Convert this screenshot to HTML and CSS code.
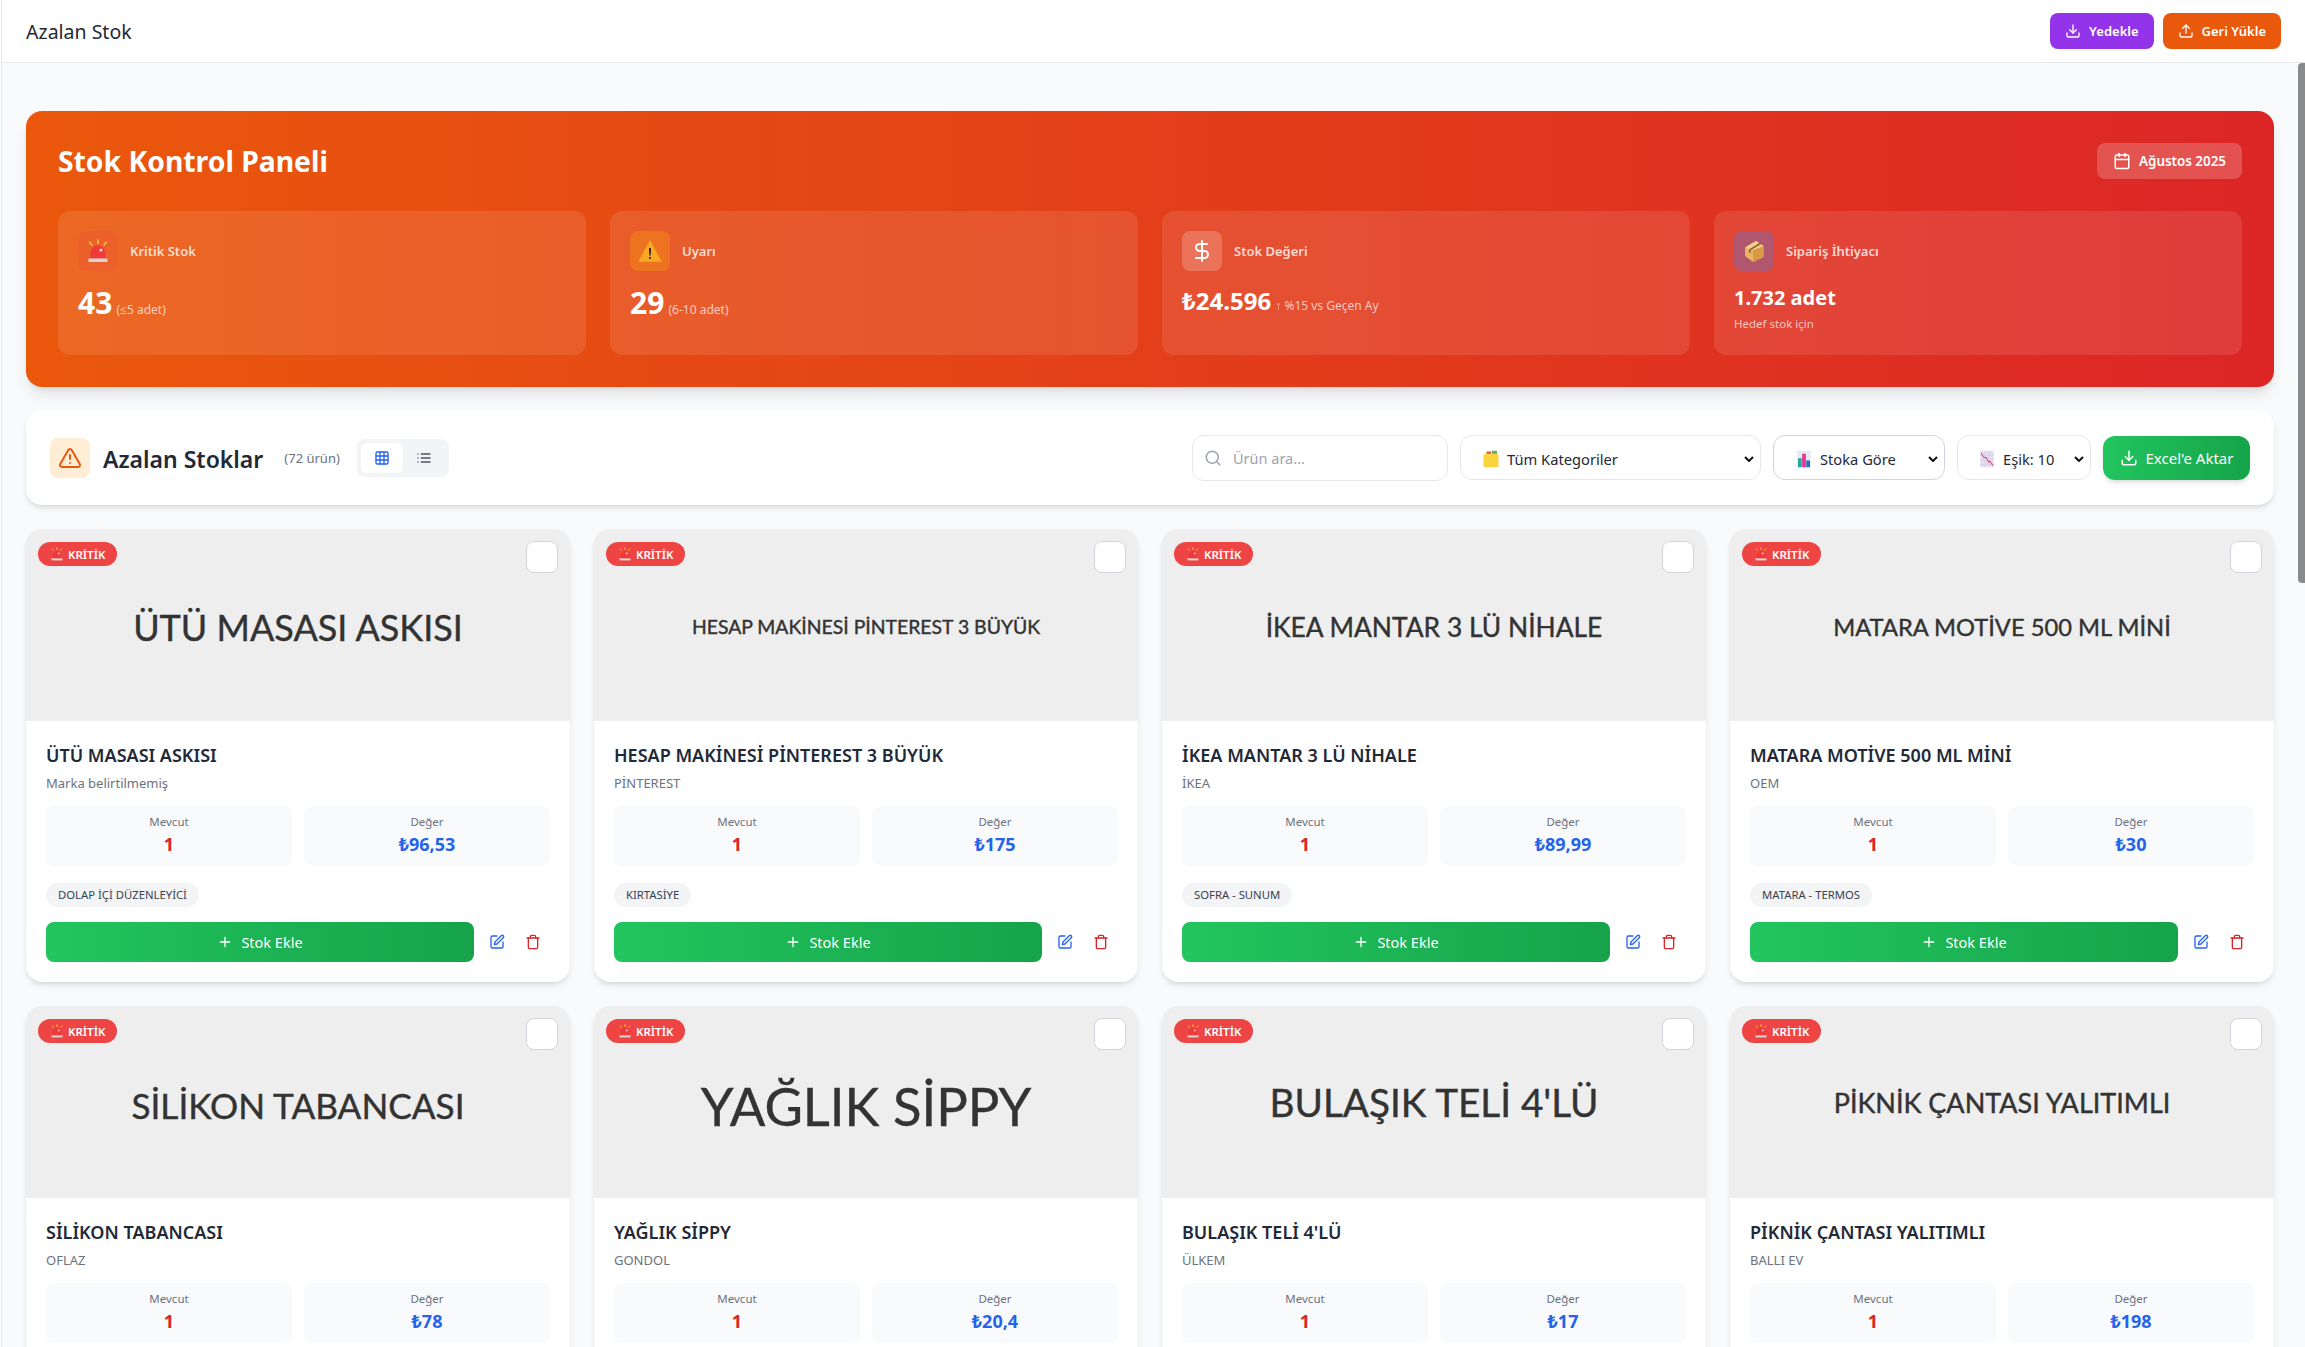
FILE: index.html
```html
<!DOCTYPE html>
<html lang="tr">
<head>
  <meta charset="UTF-8" />
  <meta name="viewport" content="width=device-width, initial-scale=1.0" />
  <title>Azalan Stok</title>
  <link rel="stylesheet" href="styles.css">
</head>
<body>
  <!-- ikonlar -->
  <svg class="sprite" xmlns="http://www.w3.org/2000/svg">
    <symbol id="i-download" viewBox="0 0 24 24"><path d="M21 15v4a2 2 0 0 1-2 2H5a2 2 0 0 1-2-2v-4"/><path d="m7 10 5 5 5-5"/><path d="M12 15V3"/></symbol>
    <symbol id="i-upload" viewBox="0 0 24 24"><path d="M21 15v4a2 2 0 0 1-2 2H5a2 2 0 0 1-2-2v-4"/><path d="m17 8-5-5-5 5"/><path d="M12 3v12"/></symbol>
    <symbol id="i-calendar" viewBox="0 0 24 24"><path d="M8 2v4"/><path d="M16 2v4"/><rect x="3" y="4" width="18" height="18" rx="2"/><path d="M3 10h18"/></symbol>
    <symbol id="i-dollar" viewBox="0 0 24 24"><path d="M12 2v20"/><path d="M17 5H9.5a3.5 3.5 0 0 0 0 7h5a3.5 3.5 0 0 1 0 7H6"/></symbol>
    <symbol id="i-alert" viewBox="0 0 24 24"><path d="m21.73 18-8-14a2 2 0 0 0-3.48 0l-8 14A2 2 0 0 0 4 21h16a2 2 0 0 0 1.73-3"/><path d="M12 9v4"/><path d="M12 17h.01"/></symbol>
    <symbol id="i-grid" viewBox="0 0 24 24"><rect x="3" y="3" width="18" height="18" rx="2"/><path d="M3 9h18"/><path d="M3 15h18"/><path d="M9 3v18"/><path d="M15 3v18"/></symbol>
    <symbol id="i-list" viewBox="0 0 24 24"><path d="M8 6h13"/><path d="M8 12h13"/><path d="M8 18h13"/><path d="M3 6h.01"/><path d="M3 12h.01"/><path d="M3 18h.01"/></symbol>
    <symbol id="i-search" viewBox="0 0 24 24"><circle cx="11" cy="11" r="8"/><path d="m21 21-4.3-4.3"/></symbol>
    <symbol id="i-plus" viewBox="0 0 24 24"><path d="M5 12h14"/><path d="M12 5v14"/></symbol>
    <symbol id="i-edit" viewBox="0 0 24 24"><path d="M12 3H5a2 2 0 0 0-2 2v14a2 2 0 0 0 2 2h14a2 2 0 0 0 2-2v-7"/><path d="M18.4 2.6a2.1 2.1 0 1 1 3 3L12 15l-4 1 1-4Z"/></symbol>
    <symbol id="i-trash" viewBox="0 0 24 24"><path d="M3 6h18"/><path d="M19 6v14a2 2 0 0 1-2 2H7a2 2 0 0 1-2-2V6"/><path d="M8 6V4a2 2 0 0 1 2-2h4a2 2 0 0 1 2 2v2"/></symbol>
    <symbol id="e-siren" viewBox="0 0 24 24">
      <path d="M12 .8v3.700M3.500 3l2.500 3M20.500 3 18 6" fill="none" stroke="#f9c23c" stroke-width="1.600" stroke-linecap="round"/>
      <path d="M4.500 19.500V14a7.500 7.500 0 0 1 15 0v5.500z" fill="#f03a3a"/>
      <circle cx="15" cy="11" r="1.600" fill="#ffd5d5"/>
      <rect x="2.500" y="19.500" width="19" height="3.500" fill="#d5d5d5"/>
    </symbol>
    <symbol id="e-warning" viewBox="0 0 24 24">
      <path d="M12 2.500 22.500 22h-21z" fill="#f9a825" stroke="#f9a825" stroke-width="1.500" stroke-linejoin="round"/>
      <path d="M11.100 9h1.800l-.3 7.500h-1.200z" fill="#111"/><circle cx="12" cy="19" r="1" fill="#111"/>
    </symbol>
    <symbol id="e-box" viewBox="0 0 24 24">
      <path d="M3 8.500 14 2l7.500 5v11L11 23l-8-6z" fill="#e8b565"/>
      <path d="M11 11v12l10.500-5V7z" fill="#d99a45"/>
      <path d="M3 8.500 11 11l10.500-4L14 2z" fill="#f5cd8a"/>
      <path d="M7 10.500 17.500 4l1.600 1L8.600 11.200z" fill="#8a5a2b"/>
      <path d="M7 10.500v3l1.600.6v-2.900z" fill="#8a5a2b"/>
    </symbol>
    <symbol id="e-dividers" viewBox="0 0 24 24">
      <rect x="6" y="2" width="6" height="5" fill="#e2574c"/><rect x="13" y="1" width="7" height="5" fill="#5cb85c"/>
      <rect x="2" y="5" width="20" height="18" rx="2.500" fill="#fdd33f"/>
    </symbol>
    <symbol id="e-bars" viewBox="0 0 24 24">
      <rect x="3" y="1" width="18" height="22" fill="#e6e8f2"/>
      <rect x="4" y="11" width="5" height="12" fill="#1fa8a0"/><rect x="9.500" y="5" width="5" height="18" fill="#e5398b"/><rect x="15" y="14" width="5" height="9" fill="#2b6cc4"/>
    </symbol>
    <symbol id="e-down" viewBox="0 0 24 24">
      <rect x="3" y="1" width="18" height="22" fill="#e3def0"/>
      <path d="M3 7h18M3 13h18M3 19h18M9 1v22M15 1v22" stroke="#cfc9e0" stroke-width=".8" fill="none"/>
      <path d="m4 4 4 6 3 0 3 6 2-1 4 6" stroke="#e0447c" stroke-width="1.400" fill="none"/>
    </symbol>
  </svg>

  <div class="rail"></div>

  <div class="app">
    <!-- Üst bar -->
    <header class="topbar">
      <span class="topbar__title">Azalan Stok</span>
      <div class="topbar__actions">
        <button class="top-btn top-btn--purple" type="button"><svg class="ico ico--16"><use href="#i-download"/></svg>Yedekle</button>
        <button class="top-btn top-btn--orange" type="button"><svg class="ico ico--16"><use href="#i-upload"/></svg>Geri Yükle</button>
      </div>
    </header>

    <main class="content">
      <div class="scroll-thumb"></div>

      <!-- Panel -->
      <section class="hero">
        <div class="hero__head">
          <h1 class="hero__title">Stok Kontrol Paneli</h1>
          <div class="date-pill"><svg class="ico ico--18"><use href="#i-calendar"/></svg>Ağustos 2025</div>
        </div>
        <div class="hero__stats">
          <div class="stat">
            <div class="stat__head">
              <span class="stat__icon stat__icon--red"><svg class="emoji emoji--24"><use href="#e-siren"/></svg></span>
              <span class="stat__label">Kritik Stok</span>
            </div>
            <div class="stat__value"><b class="num-lg">43</b> <small>(≤5 adet)</small></div>
          </div>
          <div class="stat">
            <div class="stat__head">
              <span class="stat__icon stat__icon--amber"><svg class="emoji emoji--24"><use href="#e-warning"/></svg></span>
              <span class="stat__label">Uyarı</span>
            </div>
            <div class="stat__value"><b class="num-lg">29</b> <small>(6-10 adet)</small></div>
          </div>
          <div class="stat">
            <div class="stat__head">
              <span class="stat__icon stat__icon--white"><svg class="ico ico--24"><use href="#i-dollar"/></svg></span>
              <span class="stat__label">Stok Değeri</span>
            </div>
            <div class="stat__value stat__value--mid"><b class="num-md">₺24.596</b> <small>↑ %15 vs Geçen Ay</small></div>
          </div>
          <div class="stat">
            <div class="stat__head">
              <span class="stat__icon stat__icon--blue"><svg class="emoji emoji--24"><use href="#e-box"/></svg></span>
              <span class="stat__label">Sipariş İhtiyacı</span>
            </div>
            <div class="stat__value stat__value--sm"><b class="num-sm">1.732 adet</b></div>
            <div class="stat__note">Hedef stok için</div>
          </div>
        </div>
      </section>

      <!-- Araç çubuğu -->
      <section class="toolbar">
        <div class="toolbar__left">
          <span class="toolbar__icon"><svg class="ico ico--24"><use href="#i-alert"/></svg></span>
          <h2 class="toolbar__title">Azalan Stoklar</h2>
          <span class="toolbar__count">(72 ürün)</span>
          <div class="view-toggle">
            <button class="view-toggle__btn active" type="button"><svg class="ico ico--16"><use href="#i-grid"/></svg></button>
            <button class="view-toggle__btn" type="button"><svg class="ico ico--16"><use href="#i-list"/></svg></button>
          </div>
        </div>
        <div class="toolbar__right">
          <label class="search">
            <svg class="ico ico--18 search__icon"><use href="#i-search"/></svg>
            <input class="search__input" type="text" placeholder="Ürün ara...">
          </label>
          <div class="pick pick--cat"><svg class="emoji emoji--16"><use href="#e-dividers"/></svg><span class="pick__text">Tüm Kategoriler</span><svg class="pick__chev" viewBox="0 0 10 6"><path d="M1 1l4 4 4-4"/></svg></div>
          <div class="pick pick--sort"><svg class="emoji emoji--16"><use href="#e-bars"/></svg><span class="pick__text">Stoka Göre</span><svg class="pick__chev" viewBox="0 0 10 6"><path d="M1 1l4 4 4-4"/></svg></div>
          <div class="pick pick--limit"><svg class="emoji emoji--16"><use href="#e-down"/></svg><span class="pick__text">Eşik: 10</span><svg class="pick__chev" viewBox="0 0 10 6"><path d="M1 1l4 4 4-4"/></svg></div>
          <button class="excel-btn" type="button"><svg class="ico ico--18"><use href="#i-download"/></svg>Excel'e Aktar</button>
        </div>
      </section>

      <!-- Ürünler -->
      <section class="grid">
        <article class="card">
          <div class="thumb thumb--36">ÜTÜ MASASI ASKISI<span class="badge"><svg class="emoji emoji--14"><use href="#e-siren"/></svg>KRİTİK</span><input class="check" type="checkbox"></div>
          <div class="card__body">
            <h3 class="card__name">ÜTÜ MASASI ASKISI</h3>
            <p class="card__brand">Marka belirtilmemiş</p>
            <div class="figures">
              <div class="figure"><span class="figure__label">Mevcut</span><b class="figure__value figure__value--red">1</b></div>
              <div class="figure"><span class="figure__label">Değer</span><b class="figure__value figure__value--blue">₺96,53</b></div>
            </div>
            <span class="tag">DOLAP İÇİ DÜZENLEYİCİ</span>
            <div class="card__actions">
              <button class="add-btn" type="button"><svg class="ico ico--16"><use href="#i-plus"/></svg>Stok Ekle</button>
              <button class="icon-btn icon-btn--blue" type="button"><svg class="ico ico--16"><use href="#i-edit"/></svg></button>
              <button class="icon-btn icon-btn--red" type="button"><svg class="ico ico--16"><use href="#i-trash"/></svg></button>
            </div>
          </div>
        </article>

        <article class="card">
          <div class="thumb thumb--19">HESAP MAKİNESİ PİNTEREST 3 BÜYÜK<span class="badge"><svg class="emoji emoji--14"><use href="#e-siren"/></svg>KRİTİK</span><input class="check" type="checkbox"></div>
          <div class="card__body">
            <h3 class="card__name">HESAP MAKİNESİ PİNTEREST 3 BÜYÜK</h3>
            <p class="card__brand">PİNTEREST</p>
            <div class="figures">
              <div class="figure"><span class="figure__label">Mevcut</span><b class="figure__value figure__value--red">1</b></div>
              <div class="figure"><span class="figure__label">Değer</span><b class="figure__value figure__value--blue">₺175</b></div>
            </div>
            <span class="tag">KIRTASİYE</span>
            <div class="card__actions">
              <button class="add-btn" type="button"><svg class="ico ico--16"><use href="#i-plus"/></svg>Stok Ekle</button>
              <button class="icon-btn icon-btn--blue" type="button"><svg class="ico ico--16"><use href="#i-edit"/></svg></button>
              <button class="icon-btn icon-btn--red" type="button"><svg class="ico ico--16"><use href="#i-trash"/></svg></button>
            </div>
          </div>
        </article>

        <article class="card">
          <div class="thumb thumb--26">İKEA MANTAR 3 LÜ NİHALE<span class="badge"><svg class="emoji emoji--14"><use href="#e-siren"/></svg>KRİTİK</span><input class="check" type="checkbox"></div>
          <div class="card__body">
            <h3 class="card__name">İKEA MANTAR 3 LÜ NİHALE</h3>
            <p class="card__brand">İKEA</p>
            <div class="figures">
              <div class="figure"><span class="figure__label">Mevcut</span><b class="figure__value figure__value--red">1</b></div>
              <div class="figure"><span class="figure__label">Değer</span><b class="figure__value figure__value--blue">₺89,99</b></div>
            </div>
            <span class="tag">SOFRA - SUNUM</span>
            <div class="card__actions">
              <button class="add-btn" type="button"><svg class="ico ico--16"><use href="#i-plus"/></svg>Stok Ekle</button>
              <button class="icon-btn icon-btn--blue" type="button"><svg class="ico ico--16"><use href="#i-edit"/></svg></button>
              <button class="icon-btn icon-btn--red" type="button"><svg class="ico ico--16"><use href="#i-trash"/></svg></button>
            </div>
          </div>
        </article>

        <article class="card">
          <div class="thumb thumb--24">MATARA MOTİVE 500 ML MİNİ<span class="badge"><svg class="emoji emoji--14"><use href="#e-siren"/></svg>KRİTİK</span><input class="check" type="checkbox"></div>
          <div class="card__body">
            <h3 class="card__name">MATARA MOTİVE 500 ML MİNİ</h3>
            <p class="card__brand">OEM</p>
            <div class="figures">
              <div class="figure"><span class="figure__label">Mevcut</span><b class="figure__value figure__value--red">1</b></div>
              <div class="figure"><span class="figure__label">Değer</span><b class="figure__value figure__value--blue">₺30</b></div>
            </div>
            <span class="tag">MATARA - TERMOS</span>
            <div class="card__actions">
              <button class="add-btn" type="button"><svg class="ico ico--16"><use href="#i-plus"/></svg>Stok Ekle</button>
              <button class="icon-btn icon-btn--blue" type="button"><svg class="ico ico--16"><use href="#i-edit"/></svg></button>
              <button class="icon-btn icon-btn--red" type="button"><svg class="ico ico--16"><use href="#i-trash"/></svg></button>
            </div>
          </div>
        </article>

        <article class="card">
          <div class="thumb thumb--35 thumb--low">SİLİKON TABANCASI<span class="badge"><svg class="emoji emoji--14"><use href="#e-siren"/></svg>KRİTİK</span><input class="check" type="checkbox"></div>
          <div class="card__body">
            <h3 class="card__name">SİLİKON TABANCASI</h3>
            <p class="card__brand">OFLAZ</p>
            <div class="figures">
              <div class="figure"><span class="figure__label">Mevcut</span><b class="figure__value figure__value--red">1</b></div>
              <div class="figure"><span class="figure__label">Değer</span><b class="figure__value figure__value--blue">₺78</b></div>
            </div>
          </div>
        </article>

        <article class="card">
          <div class="thumb thumb--53 thumb--low">YAĞLIK SİPPY<span class="badge"><svg class="emoji emoji--14"><use href="#e-siren"/></svg>KRİTİK</span><input class="check" type="checkbox"></div>
          <div class="card__body">
            <h3 class="card__name">YAĞLIK SİPPY</h3>
            <p class="card__brand">GONDOL</p>
            <div class="figures">
              <div class="figure"><span class="figure__label">Mevcut</span><b class="figure__value figure__value--red">1</b></div>
              <div class="figure"><span class="figure__label">Değer</span><b class="figure__value figure__value--blue">₺20,4</b></div>
            </div>
          </div>
        </article>

        <article class="card">
          <div class="thumb thumb--39 thumb--up">BULAŞIK TELİ 4'LÜ<span class="badge"><svg class="emoji emoji--14"><use href="#e-siren"/></svg>KRİTİK</span><input class="check" type="checkbox"></div>
          <div class="card__body">
            <h3 class="card__name">BULAŞIK TELİ 4'LÜ</h3>
            <p class="card__brand">ÜLKEM</p>
            <div class="figures">
              <div class="figure"><span class="figure__label">Mevcut</span><b class="figure__value figure__value--red">1</b></div>
              <div class="figure"><span class="figure__label">Değer</span><b class="figure__value figure__value--blue">₺17</b></div>
            </div>
          </div>
        </article>

        <article class="card">
          <div class="thumb thumb--27 thumb--up">PİKNİK ÇANTASI YALITIMLI<span class="badge"><svg class="emoji emoji--14"><use href="#e-siren"/></svg>KRİTİK</span><input class="check" type="checkbox"></div>
          <div class="card__body">
            <h3 class="card__name">PİKNİK ÇANTASI YALITIMLI</h3>
            <p class="card__brand">BALLI EV</p>
            <div class="figures">
              <div class="figure"><span class="figure__label">Mevcut</span><b class="figure__value figure__value--red">1</b></div>
              <div class="figure"><span class="figure__label">Değer</span><b class="figure__value figure__value--blue">₺198</b></div>
            </div>
          </div>
        </article>
      </section>
    </main>
  </div>
</body>
</html>
```

FILE: styles.css
```css
/* RESET & BASE --------------------------------------------------------*/
*,::before,::after{box-sizing:border-box;margin:0;padding:0}
html,body{height:100%}
body{
  display:flex;
  overflow:hidden;
  font-family:"Noto Sans","Open Sans",sans-serif;
  background:#fff;
  color:#1f2937;
}
button{font-family:inherit;border:none;cursor:pointer}
.sprite{display:none}
.ico{fill:none;stroke:currentColor;stroke-width:2;stroke-linecap:round;stroke-linejoin:round;flex-shrink:0}
.ico--16{width:16px;height:16px}
.ico--18{width:18px;height:18px}
.ico--24{width:24px;height:24px}
.emoji{flex-shrink:0}
.emoji--14{width:14px;height:14px}
.emoji--16{width:18px;height:18px}
.emoji--24{width:24px;height:24px}

/* KABUK ---------------------------------------------------------------*/
.rail{width:2px;flex-shrink:0;background:#fff;border-right:1px solid #e5e7eb}
.app{flex:1;min-width:0;display:flex;flex-direction:column}

.topbar{
  height:63px;
  flex-shrink:0;
  display:flex;
  align-items:center;
  justify-content:space-between;
  padding:0 24px;
  background:#fff;
  border-bottom:1px solid #e5e7eb;
}
.topbar__title{font-size:19.5px;color:#1f2937}
.topbar__actions{display:flex;gap:9px}
.top-btn{
  height:36px;
  padding:0 15px;
  display:flex;
  align-items:center;
  gap:8px;
  border-radius:8px;
  color:#fff;
  font-size:13px;
  font-weight:600;
}
.top-btn--purple{background:#9333ea}
.top-btn--orange{background:#ea580c}

.content{
  position:relative;
  flex:1;
  min-height:0;
  overflow:hidden;
  padding:48px 31px 0 24px;
  background:#f9fafb;
}
.scroll-thumb{position:absolute;top:0;right:0;width:7px;height:520px;background:#8a8a8a;border-radius:4px 0 0 4px}

/* PANEL ---------------------------------------------------------------*/
.hero{
  padding:32px;
  margin-bottom:23px;
  border-radius:16px;
  background:linear-gradient(90deg,#ea580c,#dc2626);
  box-shadow:0 10px 15px -3px rgba(0,0,0,.1),0 4px 6px -4px rgba(0,0,0,.1);
  color:#fff;
}
.hero__head{display:flex;align-items:center;justify-content:space-between;height:36px;margin-bottom:32px}
.hero__title{font-size:28.3px;font-weight:700}
.date-pill{
  height:36px;
  padding:0 16px;
  display:flex;
  align-items:center;
  gap:8px;
  background:rgba(255,255,255,.2);
  border-radius:8px;
  font-size:13.400px;
  font-weight:600;
}
.hero__stats{display:grid;grid-template-columns:repeat(4,1fr);gap:24px}
.stat{height:144px;padding:20px;background:rgba(255,255,255,.1);border-radius:12px}
.stat__head{display:flex;align-items:center;gap:12px}
.stat__icon{width:40px;height:40px;border-radius:8px;display:flex;align-items:center;justify-content:center}
.stat__icon--red{background:rgba(239,68,68,.2)}
.stat__icon--amber{background:rgba(245,158,11,.35)}
.stat__icon--white{background:rgba(255,255,255,.2)}
.stat__icon--blue{background:rgba(59,130,246,.3)}
.stat__label{font-size:13px;font-weight:600;color:rgba(255,255,255,.8)}
.stat__value{margin-top:12px;line-height:40px}
.stat__value--mid{margin-top:10px}
.stat__value--sm{margin-top:12px;line-height:30px}
.stat__value small{font-size:12px;color:rgba(255,255,255,.7)}
.num-lg{font-size:30px}
.num-md{font-size:24px}
.num-sm{font-size:20px}
.stat__note{margin-top:2px;font-size:11.5px;color:rgba(255,255,255,.7)}

/* ARAÇ ÇUBUĞU ---------------------------------------------------------*/
.toolbar{
  height:95px;
  padding:0 24px;
  margin-bottom:24px;
  display:flex;
  align-items:center;
  justify-content:space-between;
  background:#fff;
  border-radius:16px;
  box-shadow:0 4px 6px -1px rgba(0,0,0,.1),0 2px 4px -2px rgba(0,0,0,.1);
}
.toolbar__left,.toolbar__right{display:flex;align-items:center}
.toolbar__right{gap:12px}
.toolbar__icon{
  width:40px;height:40px;
  margin-right:13px;
  display:flex;align-items:center;justify-content:center;
  background:#ffedd5;
  color:#ea580c;
  border-radius:8px;
}
.toolbar__title{padding-top:2px;font-size:23px;font-weight:600;color:#1f2937}
.toolbar__count{margin:0 17px 0 21px;font-size:13px;color:#6b7280}
.view-toggle{display:flex;padding:4px;background:#f3f4f6;border-radius:8px}
.view-toggle__btn{
  width:42px;height:30px;
  display:flex;align-items:center;justify-content:center;
  background:transparent;
  color:#4b5563;
  border-radius:6px;
}
.view-toggle__btn.active{background:#fff;color:#2563eb}

.search{position:relative;display:block;width:256px;height:46px}
.search__icon{position:absolute;left:12px;top:14px;color:#9ca3af}
.search__input{
  width:100%;height:100%;
  padding:0 12px 0 40px;
  border:1px solid #e5e7eb;
  border-radius:12px;
  font:14.5px "Noto Sans",sans-serif;
  outline:none;
}
.search__input::placeholder{color:#9ca3af}
.pick{
  height:45px;
  padding:2px 6px 0 21px;
  display:flex;
  align-items:center;
  gap:7px;
  border:1px solid #e5e7eb;
  border-radius:12px;
  background:#fff;
  font-size:14.7px;
  color:#1f2937;
}
.pick--cat{width:301px}
.pick--sort{width:172px;border-color:#d1d5db}
.pick--limit{width:134px;padding-left:20px}
.pick__text{flex:1}
.pick__chev{width:10px;height:6px;fill:none;stroke:#111;stroke-width:2}
.excel-btn{
  width:147px;height:44px;
  display:flex;align-items:center;justify-content:center;
  gap:8px;
  background:linear-gradient(90deg,#22c55e,#16a34a);
  color:#fff;
  border-radius:12px;
  font-size:15px;
  font-weight:400;
  box-shadow:0 4px 6px -1px rgba(0,0,0,.1),0 2px 4px -2px rgba(0,0,0,.1);
}

/* KARTLAR -------------------------------------------------------------*/
.grid{display:grid;grid-template-columns:repeat(4,1fr);gap:24px}
.card{background:#fff;border-radius:16px;overflow:hidden;box-shadow:0 4px 6px -1px rgba(0,0,0,.1),0 2px 4px -2px rgba(0,0,0,.1)}
.thumb{
  position:relative;
  height:192px;
  padding-top:3px;
  display:flex;
  align-items:center;
  justify-content:center;
  background:#eee;
  color:#333;
  font-family:"Lato",sans-serif;
  -webkit-text-stroke:.4px #333;
}
.thumb--low{padding-top:6px}
.thumb--up{padding-top:0}
.thumb--19{font-size:19.4px}
.thumb--24{font-size:23.7px}
.thumb--26{font-size:26.4px}
.thumb--27{font-size:27px}
.thumb--35{font-size:35.2px}
.thumb--36{font-size:36px}
.thumb--39{font-size:38.7px}
.thumb--53{font-size:52.6px}
.badge{
  position:absolute;
  top:13px;left:12px;
  height:24px;
  padding:0 12px;
  display:flex;
  align-items:center;
  gap:4px;
  background:#ef4444;
  color:#fff;
  border-radius:12px;
  font-family:"Noto Sans",sans-serif;
  font-size:11.5px;
  font-weight:600;
  -webkit-text-stroke:0;
}
.check{
  position:absolute;
  top:12px;right:12px;
  width:32px;height:32px;
  appearance:none;
  background:#fff;
  border:1px solid #d1d5db;
  border-radius:8px;
}

.card__body{padding:20px}
.card__name{font-size:18px;line-height:28px;font-weight:600;color:#1f2937}
.card__brand{margin-top:4px;font-size:13px;line-height:20px;color:#6b7280}
.figures{display:grid;grid-template-columns:1fr 1fr;gap:12px;margin-top:13px}
.figure{height:60px;padding-top:8px;background:#f9fafb;border-radius:8px;text-align:center}
.figure__label{display:block;font-size:11.5px;line-height:16px;color:#6b7280}
.figure__value{display:block;font-size:18px;line-height:28px;font-weight:700}
.figure__value--red{color:#dc2626}
.figure__value--blue{color:#2563eb}
.tag{
  display:inline-block;
  height:24px;
  margin-top:17px;
  padding:0 12px;
  background:#f3f4f6;
  border-radius:12px;
  font-size:11.3px;
  line-height:24px;
  color:#374151;
}
.card__actions{display:flex;margin-top:15px;gap:2px}
.add-btn{
  flex:1;
  height:40px;
  margin-right:4px;
  display:flex;align-items:center;justify-content:center;
  gap:8px;
  background:linear-gradient(90deg,#22c55e,#16a34a);
  color:#fff;
  border-radius:8px;
  font-size:14.5px;
  font-weight:400;
}
.icon-btn{width:34px;height:40px;display:flex;align-items:center;justify-content:center;background:transparent}
.icon-btn--blue{color:#2563eb}
.icon-btn--red{color:#dc2626}
```
